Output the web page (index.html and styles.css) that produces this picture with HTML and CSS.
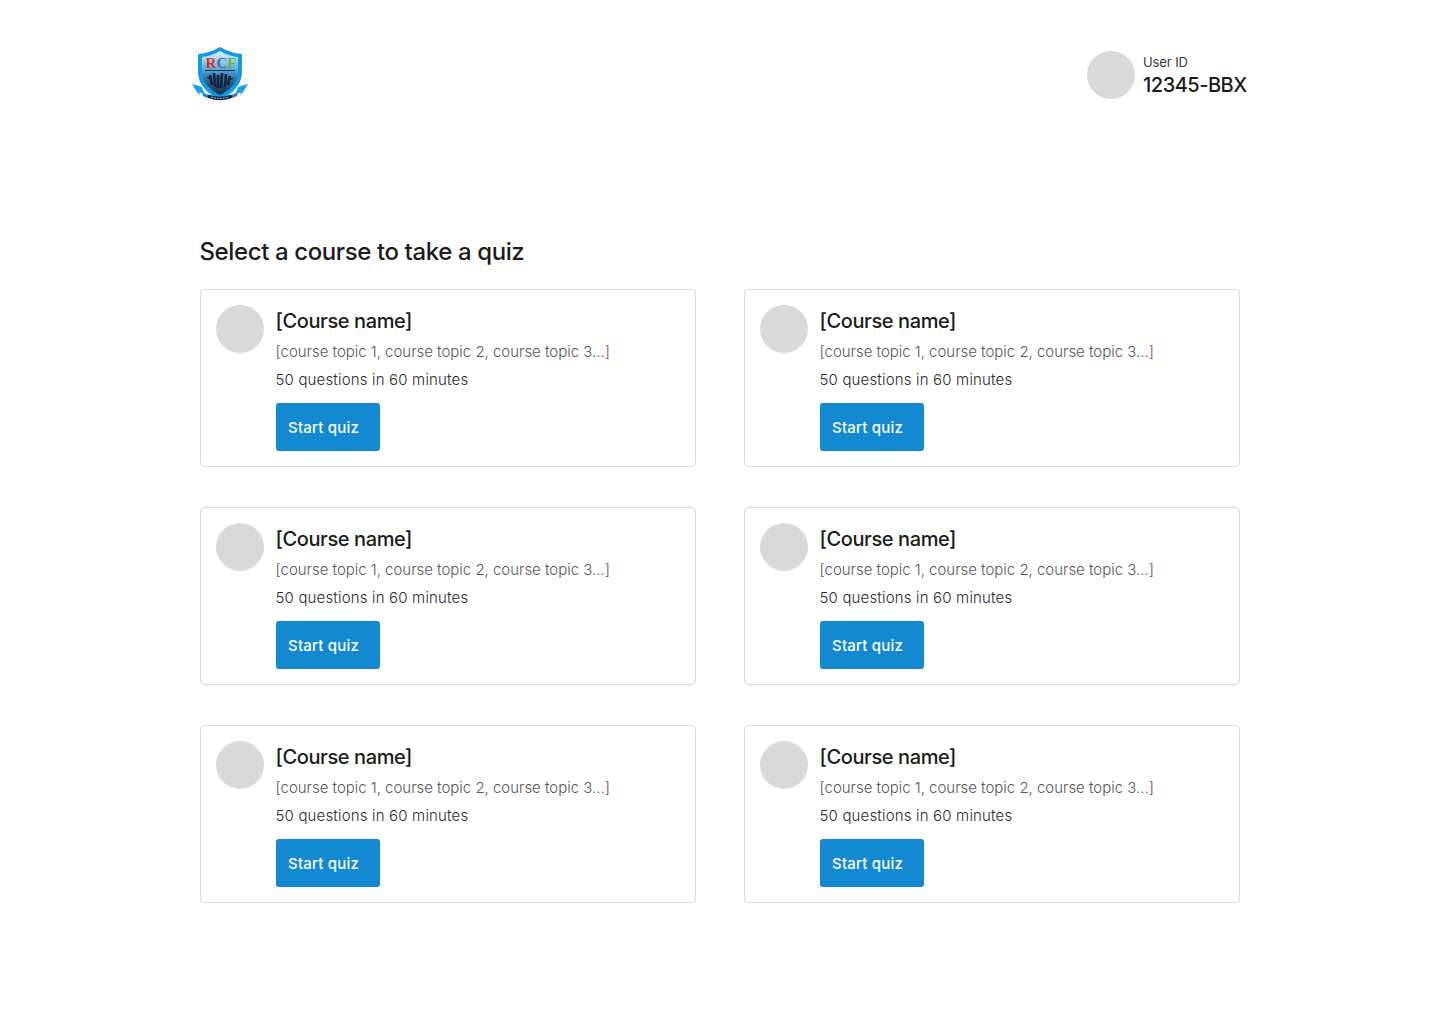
FILE: index.html
```html
<!DOCTYPE html>
<html lang="en">
<head>
<meta charset="utf-8">
<title>Select a course</title>
<link rel="stylesheet" href="styles.css">
</head>
<body>
<div class="page">
  <header class="header">
    <svg class="logo" width="56" height="54" viewBox="2 1 56 54" aria-label="RCF logo">
      <defs>
        <linearGradient id="shieldFill" x1="0" y1="0" x2="0" y2="1">
          <stop offset="0" stop-color="#e4f4fb"/>
          <stop offset="0.36" stop-color="#6fb6df"/>
          <stop offset="0.62" stop-color="#2f73ab"/>
          <stop offset="1" stop-color="#16284a"/>
        </linearGradient>
      </defs>
      <path d="M8 8 Q20 7 30 1 Q40 7 52 8 L52 28 Q50 44 30 54 Q10 44 8 28 Z" fill="#129ae0"/>
      <path d="M12 11 Q22 10 30 5 Q38 10 48 11 L48 28 Q46 41 30 49 Q14 41 12 28 Z" fill="url(#shieldFill)"/>
      <text x="31" y="22" text-anchor="middle" class="logo-text"><tspan fill="#d6332e">R</tspan><tspan fill="#3f6f9c">C</tspan><tspan fill="#62ad4c">F</tspan></text>
      <path d="M15 24.500 H45" stroke="#1d3350" stroke-width="1"/>
      <path d="M20 29l2 10M24 27l1 14M28 29v13M32 27l-1 15M36 28l-1 13M40 30l-2 9" stroke="#15233a" stroke-width="2.600" fill="none"/>
      <path d="M17 31l5 3M43 32l-6 3M27 32h6" stroke="#15233a" stroke-width="1.200" fill="none"/>
      <path d="M2 38 L12 41 L14 47 L9 47 L10 50 Q5 44 2 38Z M58 38 L48 41 L46 47 L51 47 L50 50 Q55 44 58 38Z" fill="#16a4e6"/>
      <path d="M12 46 Q30 56 48 46 L47 50 Q30 58 13 50 Z" fill="#1b86c6"/>
      <path d="M18 50 Q30 55 42 50" stroke="#14263f" stroke-width="3.500" fill="none"/>
      <path d="M21 51 Q30 54 39 51" stroke="#cfe3ee" stroke-width="0.800" stroke-dasharray="2 1" fill="none"/>
    </svg>
    <div class="user">
      <div class="avatar"></div>
      <div class="user-text">
        <div class="user-label">User ID</div>
        <div class="user-id">12345-BBX</div>
      </div>
    </div>
  </header>
  <main class="content">
    <h1 class="heading">Select a course to take a quiz</h1>
    <div class="grid">
      <article class="card"><div class="avatar"></div><div class="card-body"><h2 class="course">[Course name]</h2><p class="topics">[course topic 1, course topic 2, course topic 3...]</p><p class="meta">50 questions in 60 minutes</p><button class="start">Start quiz</button></div></article>
      <article class="card"><div class="avatar"></div><div class="card-body"><h2 class="course">[Course name]</h2><p class="topics">[course topic 1, course topic 2, course topic 3...]</p><p class="meta">50 questions in 60 minutes</p><button class="start">Start quiz</button></div></article>
      <article class="card"><div class="avatar"></div><div class="card-body"><h2 class="course">[Course name]</h2><p class="topics">[course topic 1, course topic 2, course topic 3...]</p><p class="meta">50 questions in 60 minutes</p><button class="start">Start quiz</button></div></article>
      <article class="card"><div class="avatar"></div><div class="card-body"><h2 class="course">[Course name]</h2><p class="topics">[course topic 1, course topic 2, course topic 3...]</p><p class="meta">50 questions in 60 minutes</p><button class="start">Start quiz</button></div></article>
      <article class="card"><div class="avatar"></div><div class="card-body"><h2 class="course">[Course name]</h2><p class="topics">[course topic 1, course topic 2, course topic 3...]</p><p class="meta">50 questions in 60 minutes</p><button class="start">Start quiz</button></div></article>
      <article class="card"><div class="avatar"></div><div class="card-body"><h2 class="course">[Course name]</h2><p class="topics">[course topic 1, course topic 2, course topic 3...]</p><p class="meta">50 questions in 60 minutes</p><button class="start">Start quiz</button></div></article>
    </div>
  </main>
</div>
</body>
</html>
```
FILE: styles.css
```css
* { box-sizing: border-box; }
html, body { margin: 0; background: #fff; }
body { font-family: Inter, "Liberation Sans", sans-serif; color: #1c1c1c; }
.page { width: 1056px; margin: 0 auto; }
.header { display: flex; justify-content: space-between; align-items: center; padding-top: 46px; height: 102px; }
.logo { display: block; }
.logo-text { font-family: "Liberation Serif", serif; font-size: 15px; font-weight: 700; }
.user { display: flex; align-items: center; gap: 8px; margin-top: 2px; }
.avatar { width: 48px; height: 48px; border-radius: 50%; background: #d9d9d9; flex: none; }
.user-text { width: 105px; padding-top: 2px; }
.user-label { font-size: 13px; line-height: 18px; color: #3a3a3a; letter-spacing: -0.1px; }
.user-id { margin-top: 1px; font-size: 20px; line-height: 27px; font-weight: 500; letter-spacing: -0.5px; white-space: nowrap; }
.content { margin: 0 8px; padding-top: 132px; }
.heading { margin: 0 0 19px -0.5px; font-size: 24px; line-height: 36px; font-weight: 500; letter-spacing: -0.39px; }
.grid { display: grid; grid-template-columns: 496px 496px; column-gap: 48px; row-gap: 40px; }
.card { display: flex; gap: 12px; height: 178px; padding: 15px; border: 1px solid #d9d9d9; border-radius: 4px; background: #fff; }
.card-body { margin-left: -0.5px; }
.course { margin: 0; font-size: 20px; line-height: 32px; font-weight: 500; letter-spacing: -0.4px; }
.topics { margin: 1px 0 0; font-size: 15px; line-height: 28px; color: #585858; letter-spacing: -0.02px; font-weight: 300; }
.meta { margin: 0 0 9px; font-size: 15px; line-height: 28px; color: #2a2a2a; letter-spacing: 0.17px; font-weight: 300; }
.start { display: block; width: 104px; height: 48px; padding: 0 12px; border: 0; border-radius: 3px; background: #1289d0; color: #fff; font-family: inherit; font-size: 15px; font-weight: 500; text-align: left; letter-spacing: 0.2px; margin-left: 0.5px; }
```
